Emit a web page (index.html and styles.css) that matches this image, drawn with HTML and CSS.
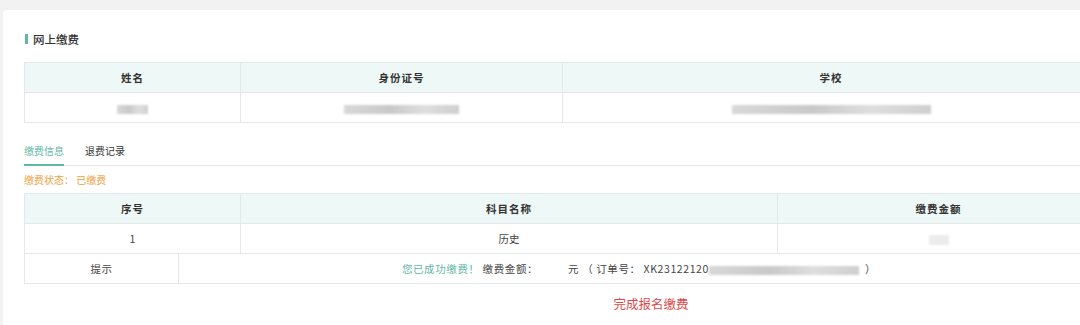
FILE: index.html
```html
<!DOCTYPE html>
<html lang="zh-CN">
<head>
<meta charset="utf-8">
<title>网上缴费</title>
<link rel="stylesheet" href="styles.css">
</head>
<body>
<div class="panel">
  <h2 class="title"><span class="bar"></span>网上缴费</h2>
  <table class="grid info">
    <colgroup><col style="width:216px"><col style="width:322px"><col></colgroup>
    <thead><tr><th>姓名</th><th>身份证号</th><th>学校</th></tr></thead>
    <tbody><tr>
      <td><span class="blur b-name"></span></td>
      <td><span class="blur b-id"></span></td>
      <td><span class="blur b-school"></span></td>
    </tr></tbody>
  </table>

  <div class="tabs">
    <span class="tab active">缴费信息</span>
    <span class="tab">退费记录</span>
  </div>
  <div class="status">缴费状态： 已缴费</div>

  <table class="grid pay">
    <colgroup><col style="width:154px"><col style="width:62px"><col style="width:537px"><col></colgroup>
    <thead><tr><th colspan="2">序号</th><th>科目名称</th><th>缴费金额</th></tr></thead>
    <tbody>
      <tr><td colspan="2">1</td><td>历史</td><td><span class="blur b-amt"></span></td></tr>
      <tr class="tip">
        <td>提示</td>
        <td colspan="3"><span class="ok">您已成功缴费！</span> 缴费金额：<span class="gap"></span>元 （ 订单号： XK23122120<span class="blur b-order"></span>）</td>
      </tr>
    </tbody>
  </table>
  <div class="done">完成报名缴费</div>
</div>
</body>
</html>
```
FILE: styles.css
```css
html, body {
  margin: 0;
  padding: 0;
  background: #f2f2f2;
  overflow: hidden;
  font-family: "Noto Sans CJK SC", "Noto Sans", sans-serif;
  color: #333;
}
.panel {
  margin: 10px 0 0 3px;
  padding: 18px 0 0 21px;
  height: 297px;
  overflow: hidden;
  background: #fff;
  border-radius: 4px 0 0 0;
}
.title {
  margin: 0 0 12px 0;
  height: 22px;
  display: flex;
  align-items: center;
  font-size: 11.5px;
  font-weight: 500;
  color: #333;
}
.bar {
  display: inline-block;
  width: 3px;
  height: 10px;
  background: #5fb8a6;
  margin: 0 5px 0 1px;
}
.grid {
  width: 1076px;
  border-collapse: collapse;
  table-layout: fixed;
  font-size: 10.5px;
}
.grid th, .grid td {
  height: 29px;
  padding: 0;
  border: 1px solid #e4e8e8;
  text-align: center;
  vertical-align: middle;
  color: #444;
}
.grid th {
  background: #eef8f7;
  font-weight: 600;
  letter-spacing: 1px;
  color: #333;
}
.blur {
  display: inline-block;
  height: 9px;
  vertical-align: middle;
  background: linear-gradient(90deg, #d8d8d8, #c9c9c9 40%, #dedede 70%, #cfcfcf);
  filter: blur(1px);
}
.b-name { width: 31px; }
.b-id { width: 115px; }
.b-school { width: 199px; }
.b-amt { width: 20px; height: 10px; background: #ececec; }
.b-order { width: 150px; margin: 0 6px 0 0; }
.tabs {
  margin-top: 16px;
  display: flex;
  gap: 21px;
  border-bottom: 1px solid #e6e6e6;
  font-size: 10px;
}
.tab {
  padding: 4px 0 6px;
  color: #333;
}
.tab.active {
  color: #5fb8a6;
  border-bottom: 2px solid #5fb8a6;
  margin-bottom: -1px;
}
.status {
  height: 27px;
  line-height: 27px;
  font-size: 10px;
  color: #eea23c;
}
.tip td {
  letter-spacing: 0.6px;
}
.ok { color: #5fb8a6; }
.gap { display: inline-block; width: 30px; }
.done {
  margin-top: 10px;
  padding-left: 178px;
  width: 898px;
  text-align: center;
  font-size: 12.5px;
  color: #e04848;
}
```
